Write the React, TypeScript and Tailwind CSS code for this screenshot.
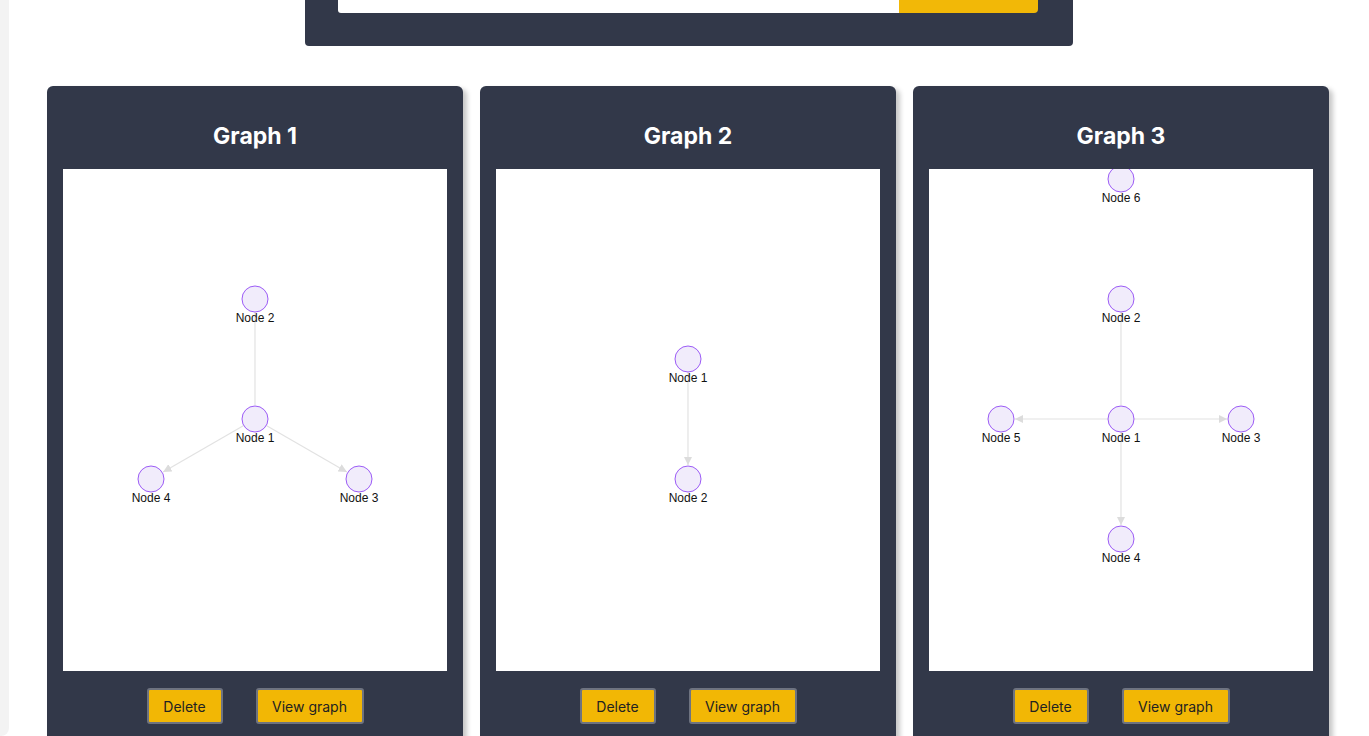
type GNode = { id: string; x: number; y: number };
type GEdge = { from: string; to: string; arrow: boolean };
type Graph = { title: string; nodes: GNode[]; edges: GEdge[] };

const graphs: Graph[] = [
  {
    title: 'Graph 1',
    nodes: [
      { id: 'Node 2', x: 192, y: 130 },
      { id: 'Node 1', x: 192, y: 250 },
      { id: 'Node 4', x: 88, y: 310 },
      { id: 'Node 3', x: 296, y: 310 },
    ],
    edges: [
      { from: 'Node 2', to: 'Node 1', arrow: false },
      { from: 'Node 1', to: 'Node 4', arrow: true },
      { from: 'Node 1', to: 'Node 3', arrow: true },
    ],
  },
  {
    title: 'Graph 2',
    nodes: [
      { id: 'Node 1', x: 192, y: 190 },
      { id: 'Node 2', x: 192, y: 310 },
    ],
    edges: [{ from: 'Node 1', to: 'Node 2', arrow: true }],
  },
  {
    title: 'Graph 3',
    nodes: [
      { id: 'Node 6', x: 192, y: 10 },
      { id: 'Node 2', x: 192, y: 130 },
      { id: 'Node 1', x: 192, y: 250 },
      { id: 'Node 5', x: 72, y: 250 },
      { id: 'Node 3', x: 312, y: 250 },
      { id: 'Node 4', x: 192, y: 370 },
    ],
    edges: [
      { from: 'Node 2', to: 'Node 1', arrow: false },
      { from: 'Node 1', to: 'Node 5', arrow: true },
      { from: 'Node 1', to: 'Node 3', arrow: true },
      { from: 'Node 1', to: 'Node 4', arrow: true },
    ],
  },
];

const R = 13;

function GraphCanvas({ graph }: { graph: Graph }) {
  const find = (id: string) => graph.nodes.find((n) => n.id === id)!;
  return (
    <svg width={384} height={502} className="block bg-white">
      <defs>
        <marker id="arr" viewBox="0 0 10 10" refX="10" refY="5" markerWidth="7" markerHeight="7" orient="auto">
          <path d="M0 0 L10 5 L0 10 z" fill="#dcdcdc" />
        </marker>
      </defs>
      {graph.edges.map((e, i) => {
        const a = find(e.from);
        const b = find(e.to);
        const dx = b.x - a.x;
        const dy = b.y - a.y;
        const len = Math.hypot(dx, dy);
        const ux = dx / len;
        const uy = dy / len;
        return (
          <line
            key={i}
            x1={a.x + ux * R}
            y1={a.y + uy * R}
            x2={b.x - ux * (R + 1)}
            y2={b.y - uy * (R + 1)}
            stroke="#e2e2e2"
            strokeWidth={1.2}
            markerEnd={e.arrow ? 'url(#arr)' : undefined}
          />
        );
      })}
      {graph.nodes.map((n) => (
        <g key={n.id}>
          <circle cx={n.x} cy={n.y} r={R} fill="#f1ecfb" stroke="#9c5cf6" strokeWidth={1} />
          <text
            x={n.x}
            y={n.y + 23}
            textAnchor="middle"
            fontSize={12}
            fill="#111"
            style={{ fontFamily: '"Liberation Sans", Arial, sans-serif' }}
          >
            {n.id}
          </text>
        </g>
      ))}
    </svg>
  );
}

function GraphCard({ graph }: { graph: Graph }) {
  return (
    <div className="w-[416px] shrink-0 rounded-[6px] bg-[#323849] px-4 shadow-[4px_3px_5px_rgba(0,0,0,0.22)]">
      <h2 className="pt-[36px] pb-[19px] text-center text-[23px] leading-[28px] font-bold text-white">{graph.title}</h2>
      <GraphCanvas graph={graph} />
      <div className="flex justify-center gap-[33px] pt-[17px] pb-6">
        <button className="h-[36px] w-[76px] rounded-[3px] border-2 border-[#6e7380] bg-[#f2b705] text-[14px] text-[#222]">
          Delete
        </button>
        <button className="h-[36px] w-[108px] rounded-[3px] border-2 border-[#6e7380] bg-[#f2b705] text-[14px] text-[#222]">
          View graph
        </button>
      </div>
    </div>
  );
}

export default function App() {
  return (
    <div className="flex h-[736px] overflow-hidden bg-white font-['Inter',sans-serif]">
      <div className="h-[736px] w-[9px] shrink-0 rounded-br-[8px] bg-[#f3f3f3]" />
      <div className="h-[736px] flex-1 overflow-hidden bg-white">
        <div className="flex justify-center">
          <div className="flex h-[46px] w-[768px] items-start rounded-b-[4px] bg-[#323849] pl-[33px]">
            <div className="h-[13px] w-[561px] rounded-bl-[3px] bg-white" />
            <div className="h-[13px] w-[139px] rounded-br-[4px] bg-[#f2b807]" />
          </div>
        </div>
        <div className="mt-[40px] flex gap-[17px] pl-[38px]">
          {graphs.map((g) => (
            <GraphCard key={g.title} graph={g} />
          ))}
        </div>
      </div>
    </div>
  );
}
